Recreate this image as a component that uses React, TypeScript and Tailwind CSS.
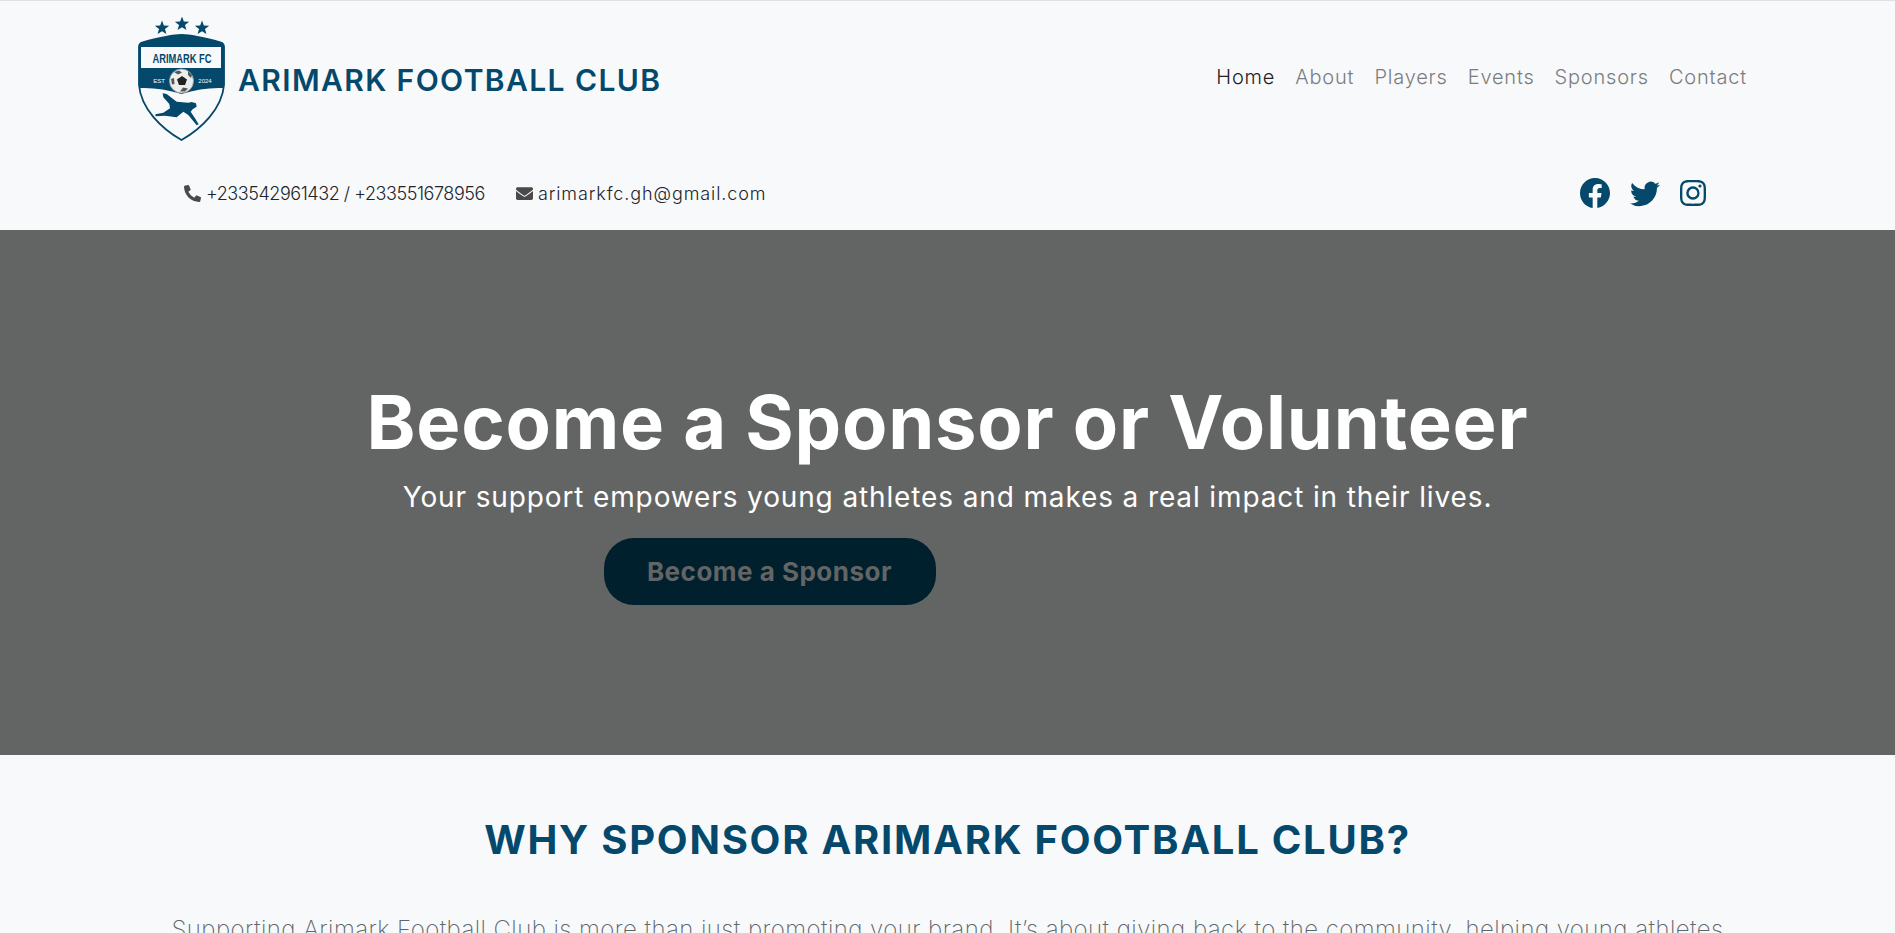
import { FaPhoneAlt, FaEnvelope } from "react-icons/fa";
import { BsFacebook, BsTwitter, BsInstagram } from "react-icons/bs";

const links = ["Home", "About", "Players", "Events", "Sponsors", "Contact"];

function Star({ x, y, r }: { x: number; y: number; r: number }) {
    const pts = Array.from({ length: 10 }, (_, i) => {
        const rad = i % 2 === 0 ? r : r * 0.42;
        const a = (Math.PI / 5) * i - Math.PI / 2;
        return `${x + rad * Math.cos(a)},${y + rad * Math.sin(a)}`;
    }).join(" ");
    return <polygon points={pts} fill="#04486b" />;
}

function Logo() {
    return (
        <svg viewBox="0 0 88 126" className="w-[88px] h-[126px] shrink-0">
            <Star x={24} y={11} r={7.5} />
            <Star x={44} y={7} r={7.5} />
            <Star x={64} y={11} r={7.5} />
            {/* shield */}
            <path d="M43.500 18 Q32 18 4 25.500 Q1 26.500 1 30 L1 68 C3 92 24 112 43.500 123 C63 112 84 92 86 68 L86 30 Q86 26.500 83 25.500 Q55 18 43.500 18 Z" fill="#f8f9fa" stroke="#04486b" strokeWidth="1.800" />
            <path d="M43.500 18 Q32 18 4 25.500 Q1 26.500 1 30 L1 71 Q22 70 43.500 77 Q65 70 86 71 L86 30 Q86 26.500 83 25.500 Q55 18 43.500 18 Z" fill="#04486b" />
            <rect x="3" y="30" width="80" height="21" fill="#f8f9fa" />
            <text x="44" y="46" textAnchor="middle" textLength="59" lengthAdjust="spacingAndGlyphs" fontFamily="'Liberation Sans', sans-serif" fontWeight="700" fontSize="13" fill="#04486b">ARIMARK FC</text>
            <text x="21" y="65.500" textAnchor="middle" fontFamily="'Liberation Sans', sans-serif" fontSize="6" fill="#f8f9fa">EST</text>
            <text x="67" y="65.500" textAnchor="middle" fontFamily="'Liberation Sans', sans-serif" fontSize="6" fill="#f8f9fa">2024</text>
            {/* ball */}
            <circle cx="43.500" cy="64" r="12" fill="#eceeee" stroke="#9a9d9e" strokeWidth="0.800" />
            <polygon points="44,59 49,62.500 47,68 41,68 39,62.500" fill="#222222" />
            <path d="M36 55 L41 53.500 L44 55.500 L40 57.500 Z M50 54 L54 58 L53 61 L50 58 Z M33 62 L36 61 L36.500 67 L34 67.500 Z M42 74.500 L47 74.500 L50 71.500 L45 70.500 Z" fill="#555555" />
            {/* player */}
            <g transform="translate(-18 -17) scale(0.3333)">
                <path d="M128 280 L140 282 L170 305 L205 308 L215 306 L228 310 L230 320 L218 328 L212 335 L225 355 L236 373 L230 376 L205 345 L190 335 L170 352 L135 347 L107 349 L106 343 L130 338 L150 325 L148 312 L130 292 Z" fill="#04486b" />
            </g>
        </svg>
    );
}

export default function App() {
    return (
        <div className="h-[933px] overflow-hidden bg-[#f8f9fa] font-['Inter',sans-serif]">
            {/* Top nav */}
            <header className="border-t border-[#dee2e6]">
                <div className="flex items-center justify-between pl-[138px] pr-[148px] pt-[16px]">
                    <div className="flex items-center gap-[12px]">
                        <Logo />
                        <span className="text-[30px] font-semibold text-[#04486b] tracking-[1.4px] whitespace-nowrap">ARIMARK FOOTBALL CLUB</span>
                    </div>
                    <nav className="flex gap-[20px] text-[20px] font-light tracking-[0.8px] text-[#7b7d80] -mt-[6px]">
                        {links.map((l, i) => (
                            <a key={l} className={i === 0 ? "text-[#1f2326]" : ""}>{l}</a>
                        ))}
                    </nav>
                </div>
                {/* Contact row */}
                <div className="flex items-center justify-between pl-[184px] pr-[189px] h-[87px] pt-[13px]">
                    <div className="flex items-center text-[18px] font-light text-[#212529]">
                        <FaPhoneAlt className="text-[#4a4a4a] text-[17px] mr-[5px]" />
                        <span className="tracking-[-0.45px]">+233542961432 / +233551678956</span>
                        <FaEnvelope className="text-[#4a4a4a] text-[17px] ml-[31px] mr-[5px]" />
                        <span className="tracking-[0.9px]">arimarkfc.gh@gmail.com</span>
                    </div>
                    <div className="flex items-center gap-[20px] text-[#04486b]">
                        <BsFacebook className="text-[30px]" />
                        <BsTwitter className="text-[30px]" />
                        <BsInstagram className="text-[26px]" />
                    </div>
                </div>
            </header>

            {/* Hero */}
            <section className="h-[525px] bg-[#636564] flex flex-col items-center pt-[148px] text-white">
                <h1 className="text-[74px] leading-[1.2] font-bold tracking-[0.8px] whitespace-nowrap">Become a Sponsor or Volunteer</h1>
                <p className="text-[28px] mt-[9px] tracking-[0.87px] whitespace-nowrap">Your support empowers young athletes and makes a real impact in their lives.</p>
                <div className="w-[1160px] pl-[236px] mt-[20px]">
                    <a className="inline-flex items-center justify-center w-[332px] h-[67px] rounded-[30px] bg-[#00202e] text-[#636564] text-[26px] font-bold tracking-[0.5px]">Become a Sponsor</a>
                </div>
            </section>

            {/* Why sponsor */}
            <section className="flex flex-col items-center pt-[55px]">
                <h2 className="text-[40px] font-bold text-[#04486b] tracking-[1.75px] whitespace-nowrap">WHY SPONSOR ARIMARK FOOTBALL CLUB?</h2>
                <p className="mt-[42px] text-[24px] font-extralight tracking-[0.43px] text-[#5f666c] whitespace-nowrap">Supporting Arimark Football Club is more than just promoting your brand. It’s about giving back to the community, helping young athletes</p>
            </section>
        </div>
    );
}
